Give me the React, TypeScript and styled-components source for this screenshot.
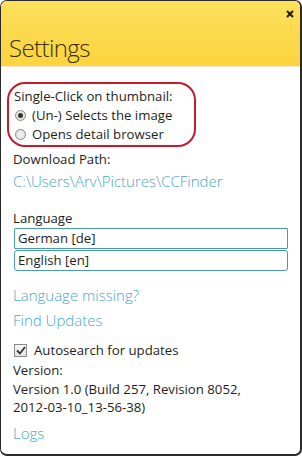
import React from "react";
import styled, { createGlobalStyle } from "styled-components";

const Global = createGlobalStyle`
  html, body { margin: 0; padding: 0; background: #ffffff; }
  * { box-sizing: border-box; }
`;

const Window = styled.div`
  width: 302px;
  height: 456px;
  border: 1px solid #2a2a2a;
  border-right-width: 2px;
  border-bottom-width: 2px;
  border-radius: 7px;
  overflow: hidden;
  background: #ffffff;
  display: flex;
  flex-direction: column;
  font-family: "Open Sans", "Noto Sans", sans-serif;
  color: #1e1e1e;
`;

const Header = styled.div`
  position: relative;
  flex: 0 0 66px;
  background: linear-gradient(#fde05c, #fbd43e);
  display: flex;
  align-items: flex-end;
  padding: 0 0 2px 8px;
  border-bottom: 1px solid #f2e9c8;
`;

const Title = styled.h1`
  margin: 0;
  font-size: 24px;
  font-weight: 300;
  line-height: normal;
  color: #3a3000;
  letter-spacing: -0.6px;
`;

const Close = styled.span`
  position: absolute;
  top: 9px;
  right: 6px;
  width: 8px;
  height: 8px;
  display: flex;
`;

const Body = styled.div`
  display: flex;
  flex-direction: column;
  padding: 15px 12px 0 12px;
`;

const Highlight = styled.div`
  border: 2px solid #c8182e;
  border-radius: 18px;
  margin: 0 0 0 -6px;
  width: 189px;
  padding: 3px 0 2px 5px;
  display: flex;
  flex-direction: column;
  gap: 1px;
`;

const Label = styled.div<{ $mt?: number }>`
  font-size: 13.2px;
  line-height: 18px;
  white-space: nowrap;
  margin-top: ${(p) => p.$mt ?? 0}px;
`;

const RadioRow = styled.label`
  display: flex;
  align-items: center;
  gap: 6px;
  font-size: 13.2px;
  line-height: 18px;
`;

const Radio = styled.span<{ $on?: boolean }>`
  width: 11px;
  height: 11px;
  border-radius: 50%;
  border: 1px solid #8a8a8a;
  background: radial-gradient(circle, #f4f4f4, #dcdcdc);
  display: flex;
  align-items: center;
  justify-content: center;
  margin-left: 1px;
  &::after {
    content: "";
    width: 5px;
    height: 5px;
    border-radius: 50%;
    background: ${(p) => (p.$on ? "#333" : "transparent")};
  }
`;

const Link = styled.a<{ $mt?: number }>`
  display: block;
  font-size: 15px;
  font-weight: 300;
  line-height: 20px;
  color: #4ba6cb;
  text-decoration: none;
  white-space: nowrap;
  margin-top: ${(p) => p.$mt ?? 0}px;
`;

const ListBox = styled.div`
  display: flex;
  flex-direction: column;
  gap: 1px;
  margin-top: 1px;
`;

const Option = styled.div<{ $sel?: boolean }>`
  height: 21px;
  border: 1px solid #4a9aa8;
  border-radius: ${(p) => (p.$sel ? "3px" : "1px")};
  padding: 0 3px;
  font-size: 13.2px;
  line-height: 19px;
  background: #fff;
  width: 274px;
  margin-left: 1px;
`;

const CheckRow = styled.label`
  display: flex;
  align-items: center;
  gap: 7px;
  font-size: 13.2px;
  line-height: 18px;
  margin-top: 11px;
`;

const Check = styled.span`
  width: 13px;
  height: 13px;
  border: 1px solid #8a8a8a;
  background: linear-gradient(#f8f8f8, #e4e4e4);
  display: flex;
  align-items: center;
  justify-content: center;
  margin-left: 1px;
`;

export default function App() {
  return (
    <>
      <Global />
      <Window>
        <Header>
          <Title>Settings</Title>
          <Close>
            <svg width="8" height="8" viewBox="0 0 8 8">
              <path d="M1 1 L7 7 M7 1 L1 7" stroke="#1a1a1a" strokeWidth="2" />
            </svg>
          </Close>
        </Header>
        <Body>
          <Highlight>
            <Label>Single-Click on thumbnail:</Label>
            <RadioRow>
              <Radio $on />
              (Un-) Selects the image
            </RadioRow>
            <RadioRow>
              <Radio />
              Opens detail browser
            </RadioRow>
          </Highlight>
          <Label $mt={3}>Download Path:</Label>
          <Link $mt={3}>C:\Users\Arv\Pictures\CCFinder</Link>
          <Label $mt={18}>Language</Label>
          <ListBox>
            <Option>German [de]</Option>
            <Option $sel>English [en]</Option>
          </ListBox>
          <Link $mt={14}>Language missing?</Link>
          <Link $mt={5}>Find Updates</Link>
          <CheckRow>
            <Check>
              <svg width="10" height="9" viewBox="0 0 10 9">
                <path d="M1 4.5 L4 7.5 L9 1" fill="none" stroke="#333" strokeWidth="1.8" />
              </svg>
            </Check>
            Autosearch for updates
          </CheckRow>
          <Label $mt={2}>Version:</Label>
          <Label $mt={1}>Version 1.0 (Build 257, Revision 8052,</Label>
          <Label>2012-03-10_13-56-38)</Label>
          <Link $mt={7}>Logs</Link>
        </Body>
      </Window>
    </>
  );
}
